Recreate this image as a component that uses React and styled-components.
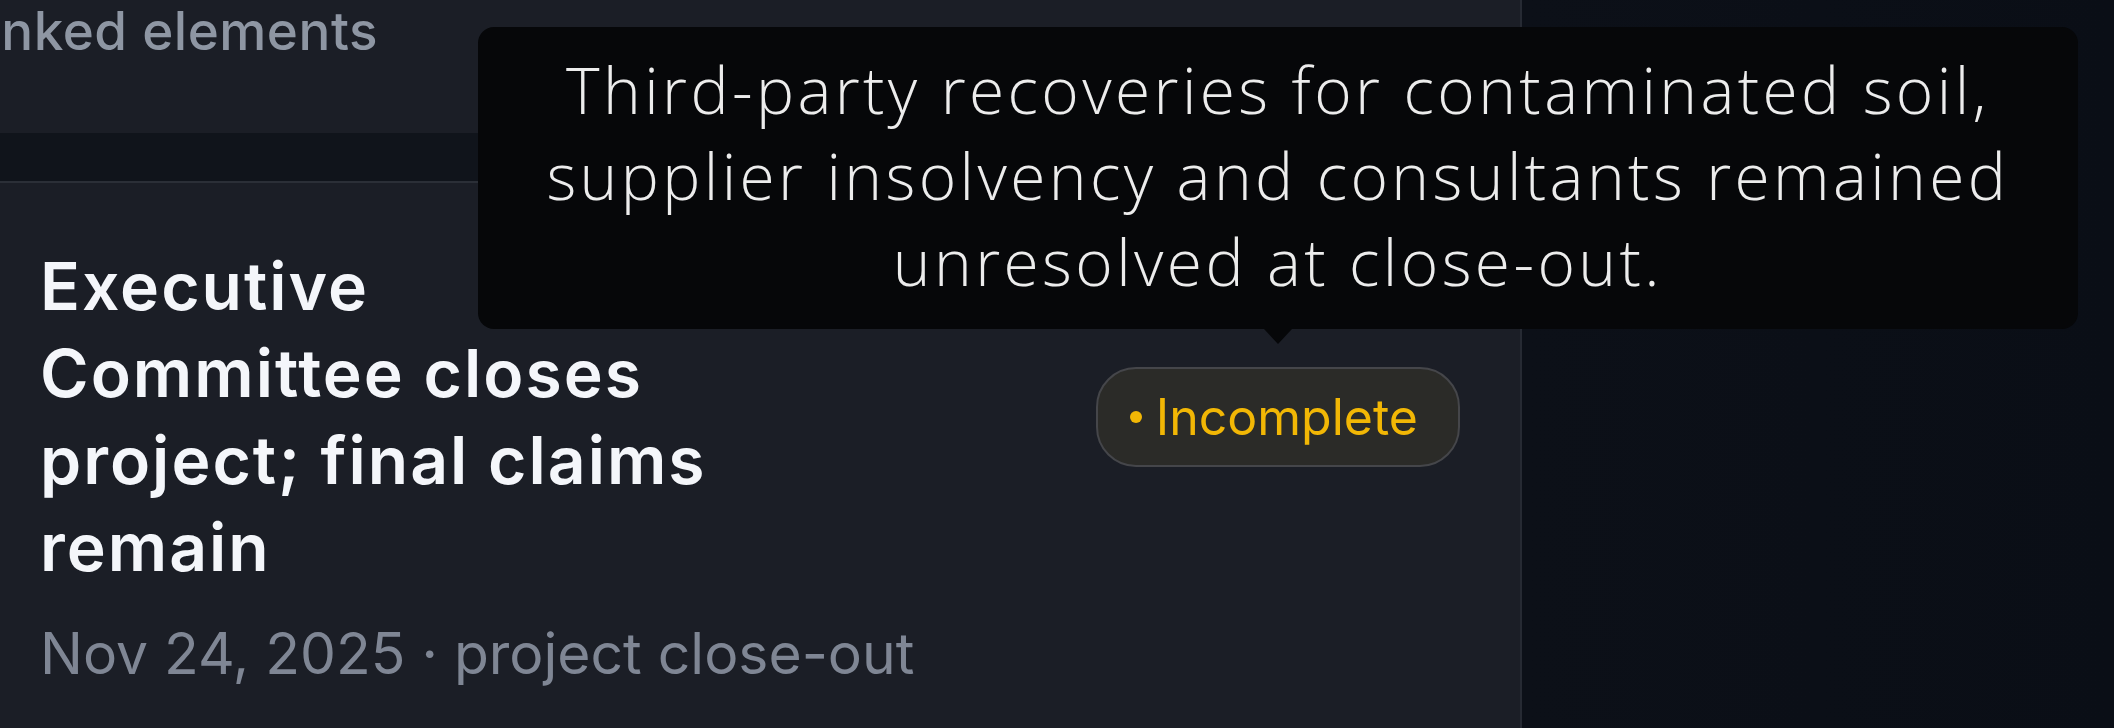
import styled, { createGlobalStyle } from "styled-components";

const GlobalStyle = createGlobalStyle`
  html, body {
    margin: 0;
    padding: 0;
    background: #0b0f17;
  }
  * {
    box-sizing: border-box;
  }
`

const Page = styled.div`
  display: flex;
  width: 100%;
  height: 728px;
  background: #0b0f17;
  font-family: "Inter", "Liberation Sans", sans-serif;
`

const Panel = styled.div`
  width: 1522px;
  flex-shrink: 0;
  display: flex;
  flex-direction: column;
  background: #10141b;
  border-right: 2px solid #262a33;
`

const SectionHead = styled.div`
  height: 133px;
  overflow: hidden;
  background: #1b1e26;
`

const SectionLabel = styled.h3`
  margin: 0 0 0 -43px;
  font-size: 53px;
  font-weight: 500;
  letter-spacing: 0.5px;
  line-height: 62px;
  color: #8e96a3;
  white-space: nowrap;
`

const Spacer = styled.div`
  height: 48px;
`

const Card = styled.div`
  flex: 1;
  display: flex;
  flex-direction: column;
  padding: 60px 60px 0 40px;
  background: #1b1e26;
  border-top: 2px solid #2b2f37;
`

const CardHead = styled.div`
  display: flex;
  align-items: center;
  justify-content: space-between;
`

const Title = styled.h2`
  margin: 0;
  max-width: 690px;
  font-size: 66px;
  font-weight: 600;
  letter-spacing: 2px;
  line-height: 87px;
  color: #f4f6fa;
`

const Meta = styled.div`
  margin-top: 28px;
  font-size: 57px;
  font-weight: 400;
  line-height: 69px;
  color: #7f8694;
  white-space: nowrap;
`

const Badge = styled.div`
  position: relative;
  display: flex;
  align-items: center;
  gap: 14px;
  height: 100px;
  padding: 0 40px 0 32px;
  border-radius: 40px;
  background: #2b2b28;
  border: 2px solid #45464a;
  font-size: 50px;
  line-height: 1;
  color: ${(p) => p.$color};
`

const Dot = styled.span`
  width: 12px;
  height: 12px;
  border-radius: 50%;
  background: ${(p) => p.$color};
`

const Tooltip = styled.div`
  position: absolute;
  left: 50%;
  bottom: calc(100% + 40px);
  transform: translateX(-50%);
  width: 1600px;
  padding: 20px 40px 24px;
  border-radius: 16px;
  background: #060709;
  color: #ececec;
  font-family: "Open Sans", "Noto Sans", sans-serif;
  font-weight: 300;
  font-size: 64px;
  letter-spacing: 3.4px;
  line-height: 86px;
  text-align: center;

  &::after {
    content: "";
    position: absolute;
    top: 100%;
    left: 50%;
    margin-left: -14px;
    border-left: 14px solid transparent;
    border-right: 14px solid transparent;
    border-top: 15px solid #060709;
  }
`

const Backdrop = styled.div`
  flex: 1;
  background: linear-gradient(90deg, #0c1018 0%, #0a0e16 100%);
`

function StatusBadge({ label, color, note }) {
  return (
    <Badge $color={color}>
      <Dot $color={color} />
      {label}
      {note && <Tooltip>{note}</Tooltip>}
    </Badge>
  )
}

export default function App() {
  return (
    <>
      <GlobalStyle />
      <Page>
        <Panel>
          <SectionHead>
            <SectionLabel>Linked elements</SectionLabel>
          </SectionHead>
          <Spacer />
          <Card>
            <CardHead>
              <Title>Executive Committee closes project; final claims remain</Title>
              <StatusBadge
                label="Incomplete"
                color="#f2b705"
                note="Third-party recoveries for contaminated soil, supplier insolvency and consultants remained unresolved at close-out."
              />
            </CardHead>
            <Meta>Nov 24, 2025 · project close-out</Meta>
          </Card>
        </Panel>
        <Backdrop />
      </Page>
    </>
  )
}
